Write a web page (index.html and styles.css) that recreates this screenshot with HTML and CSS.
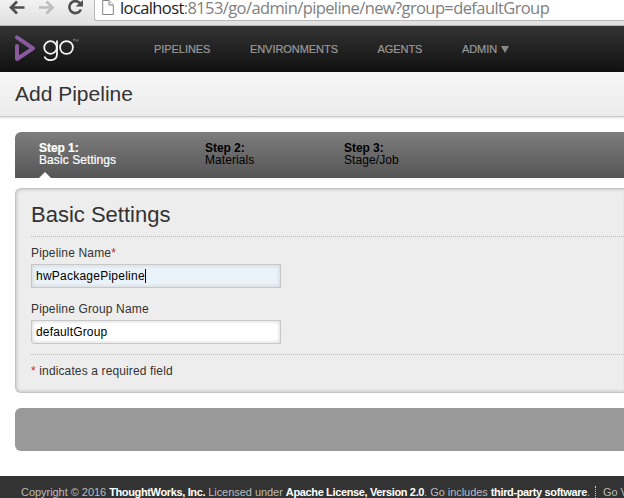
FILE: index.html
```html
<!DOCTYPE html>
<html lang="en">
<head>
<meta charset="utf-8">
<title>Add Pipeline - Go</title>
<link rel="stylesheet" href="styles.css">
</head>
<body>
<div class="browser">
  <svg class="controls" width="96" height="20" viewBox="0 0 96 20" fill="none">
    <path d="M24.500 7.500H11.500M17 1.500L11 7.500L17 13.500" stroke="#505050" stroke-width="2.700"/>
    <path d="M39 7.500H52M46.500 1.500L52.500 7.500L46.500 13.500" stroke="#bdbdbd" stroke-width="2.700"/>
    <path d="M80.200 3.500A6 6 0 1 0 80.900 9.500" stroke="#505050" stroke-width="2.600"/>
    <path d="M83 0V6.500H75.500Z" fill="#505050"/>
  </svg>
  <div class="omnibox">
    <svg class="page-icon" width="12" height="16" viewBox="0 0 12 16" fill="#fff" stroke="#858585">
      <path d="M.7 .5H7L11.300 5V14.500H.7Z"/><path d="M7 .5V5H11.300" fill="#eee"/>
    </svg>
    <span class="url"><b>localhost</b>:8153/go/admin/pipeline/new?group=defaultGroup</span>
  </div>
</div>
<header class="header">
  <div class="logo">
    <svg width="21" height="27" viewBox="0 0 21 27" fill="none" stroke="#8a5a9e" stroke-width="4" stroke-linecap="round" stroke-linejoin="round">
      <path d="M2 11V24L18 13.300L2 2.300"/>
    </svg>
    <svg class="wordmark" width="36" height="27" viewBox="0 0 36 27" fill="none" stroke="#f4f4f4" stroke-width="1.800">
      <circle cx="7.500" cy="10.500" r="6.300"/><path d="M14 3.500V17C14 25 3 24.500 1.500 19.500"/>
      <circle cx="23.500" cy="10.500" r="6.400"/>
      <path d="M30 2.500H32M31 2.500V4.500M33 4.500V2.500L34 3.500L35 2.500V4.500" stroke="#999" stroke-width=".6"/>
    </svg>
  </div>
  <nav class="nav"><a>PIPELINES</a><a>ENVIRONMENTS</a><a>AGENTS</a><a>ADMIN<i class="caret"></i></a></nav>
</header>
<div class="title-bar"><h1>Add Pipeline</h1></div>
<main class="content">
  <ol class="steps">
    <li class="current"><strong>Step 1:</strong><span>Basic Settings</span></li>
    <li><strong>Step 2:</strong><span>Materials</span></li>
    <li><strong>Step 3:</strong><span>Stage/Job</span></li>
  </ol>
  <section class="panel">
    <h2>Basic Settings</h2>
    <div class="fields">
      <div class="label">Pipeline Name<em>*</em></div>
      <div class="input focused"><span>hwPackagePipeline</span><i class="cursor"></i></div>
      <div class="label second">Pipeline Group Name</div>
      <div class="input"><span>defaultGroup</span></div>
    </div>
    <p class="required"><em>*</em> indicates a required field</p>
  </section>
  <div class="actions"></div>
</main>
<footer class="footer">
  <span class="copyright">Copyright © 2016 <b>ThoughtWorks, Inc.</b> Licensed under <b>Apache License, Version 2.0</b>. Go includes <b>third-party software</b>.</span><span class="version">Go Version</span>
</footer>
</body>
</html>
```
FILE: styles.css
```css
* { box-sizing: border-box; }
html, body { height: 100%; }
body { margin: 0; overflow: hidden; background: #fff; color: #333; font: 12px/14px "Liberation Sans", Arial, sans-serif; }
h1, h2, p, ol { margin: 0; padding: 0; font-weight: 400; }
em { font-style: normal; color: #c23; }
.browser { display: flex; height: 26px; background: linear-gradient(#f2f2f2, #e0e0e0); border-bottom: 1px solid #b5b5b5; }
.controls { flex: none; margin-right: -2px; }
.omnibox { display: flex; flex: 1; height: 21px; padding-left: 7px; background: #fff; border: 1px solid #b9b9b9; border-width: 0 0 1px 1px; border-radius: 0 0 0 3px; }
.page-icon { flex: none; margin: 0 6px 0 0; }
.url { font: 16.5px/15px "Open Sans", "Noto Sans", sans-serif; letter-spacing: -0.600px; color: #808080; white-space: nowrap; }
.url b { font-weight: 400; color: #222; }
.header { display: flex; height: 46px; background: linear-gradient(#333, #111); border-bottom: 1px solid #000; }
.logo { display: flex; width: 154px; padding: 9px 0 0 15px; flex: none; }
.wordmark { margin: 2px 0 0 7px; }
.nav { display: flex; gap: 39.500px; padding-top: 16px; color: #999; font-size: 11px; letter-spacing: -0.050px; -webkit-text-stroke: .2px #999; }
.caret { display: inline-block; margin-left: 4px; border: 4px solid transparent; border-top: 7px solid #888; border-bottom: 0; }
.title-bar { height: 45px; padding: 10px 15px; background: linear-gradient(#f6f6f6, #ececec); border-bottom: 1px solid #ccc; box-shadow: 0 1px 2px #ddd; }
h1 { font-size: 21px; line-height: 24px; }
.content { padding: 15px 0 0 15px; }
.steps { display: flex; height: 46px; padding: 10px 0 0 24px; list-style: none; color: #000; background: linear-gradient(#7d7d7d, #555); border-radius: 6px 0 0; line-height: 12px; }
.steps li { position: relative; width: 139px; letter-spacing: .080px; }
.steps .current { width: 166px; color: #fff; -webkit-text-stroke: .2px #fff; }
.steps strong, .steps span { display: block; }
.steps strong { letter-spacing: -0.050px; }
.current::after { content: ""; position: absolute; left: 0; bottom: 0; border: 6px solid transparent; border-top: 0; border-bottom-color: #fff; }
.panel { height: 205px; margin-top: 10px; padding: 12px 0 12px 15px; background: #ededed; border: 1px solid #c4c4c4; border-right: 0; border-radius: 6px 0 0 6px; box-shadow: inset 3px 0 3px -2px #ccc, inset 0 3px 3px -2px #ccc, inset 0 -3px 3px -2px #ccc; letter-spacing: .160px; }
h2 { height: 36px; font-size: 22px; line-height: 28px; letter-spacing: 0; border-bottom: 1px dotted #bbb; }
.fields { height: 118px; padding-top: 9px; border-bottom: 1px dotted #bbb; }
.input { display: flex; width: 250px; height: 24px; margin-top: 4px; padding: 4px; color: #000; background: #fff; border: 1px solid #c8c8c8; border-radius: 0 0 0 3px; box-shadow: inset 0 0 4px #ccc; }
.focused { background: #eaf3fa; border-radius: 0; letter-spacing: .240px; }
.cursor { width: 1px; height: 14px; background: #000; }
.second { margin-top: 14px; }
.required { margin-top: 9px; letter-spacing: .130px; }
.actions { height: 43px; margin-top: 15px; background: #999; border-radius: 6px 0 0 6px; }
.footer { display: flex; height: 22px; margin-top: 25px; padding: 10px 0 0 21px; overflow: hidden; background: #333; color: #bbb; font-size: 11px; line-height: 13px; letter-spacing: -0.040px; white-space: nowrap; }
.footer b { color: #fff; letter-spacing: -0.360px; }
.version { margin-left: 5px; padding-left: 7px; border-left: 1px dotted #ccc; }
```
